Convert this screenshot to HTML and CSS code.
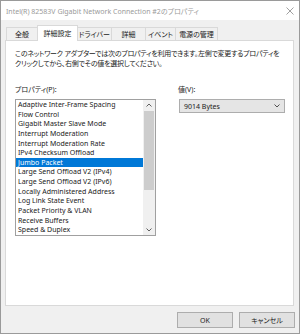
FILE: index.html
```html
<!DOCTYPE html>
<html>

<head>
    <title>
        プロパティ
    </title>
    <link rel="stylesheet" href="styles.css">
</head>

<body>
    <div class="window">
        <div class="titlebar">
            <span class="title">Intel(R) 82583V Gigabit Network Connection #2のプロパティ</span>
            <svg class="close" width="8" height="8" viewBox="0 0 8 8">
                <path d="M0.5 0.5L7.5 7.5M7.5 0.5L0.5 7.5" stroke="#a0a0a0" stroke-width="1" fill="none"/>
            </svg>
        </div>

        <div class="tabs">
            <div class="tab t1">全般</div>
            <div class="tab t2 active">詳細設定</div>
            <div class="tab t3">ドライバー</div>
            <div class="tab t4">詳細</div>
            <div class="tab t5">イベント</div>
            <div class="tab t6">電源の管理</div>
        </div>

        <div class="panel">
            <p class="desc">このネットワーク アダプターでは次のプロパティを利用できます。左側で変更するプロパティを<br>クリックしてから、右側でその値を選択してください。</p>

            <div class="fields">
                <div class="field props">
                    <label>プロパティ(P):</label>
                    <div class="listbox">
                        <ul class="items">
                            <li>Adaptive Inter-Frame Spacing</li>
                            <li>Flow Control</li>
                            <li>Gigabit Master Slave Mode</li>
                            <li>Interrupt Moderation</li>
                            <li>Interrupt Moderation Rate</li>
                            <li>IPv4 Checksum Offload</li>
                            <li class="selected">Jumbo Packet</li>
                            <li>Large Send Offload V2 (IPv4)</li>
                            <li>Large Send Offload V2 (IPv6)</li>
                            <li>Locally Administered Address</li>
                            <li>Log Link State Event</li>
                            <li>Packet Priority &amp; VLAN</li>
                            <li>Receive Buffers</li>
                            <li>Speed &amp; Duplex</li>
                        </ul>
                        <div class="scrollbar">
                            <div class="arrow">
                                <svg width="6" height="4" viewBox="0 0 6 4"><path d="M0.5 3.5L3 1L5.5 3.5" stroke="#606060" fill="none"/></svg>
                            </div>
                            <div class="track">
                                <div class="thumb"></div>
                            </div>
                            <div class="arrow">
                                <svg width="6" height="4" viewBox="0 0 6 4"><path d="M0.5 0.5L3 3L5.5 0.5" stroke="#606060" fill="none"/></svg>
                            </div>
                        </div>
                    </div>
                </div>

                <div class="field value">
                    <label>値(V):</label>
                    <div class="select">
                        <span>9014 Bytes</span>
                        <svg width="6" height="4" viewBox="0 0 6 4"><path d="M0.5 0.5L3 3L5.5 0.5" stroke="#505050" fill="none"/></svg>
                    </div>
                </div>
            </div>
        </div>

        <div class="buttons">
            <button class="btn">OK</button>
            <button class="btn">キャンセル</button>
        </div>
    </div>
</body>
</html>
```

FILE: styles.css
```css
body {
    margin: 0;
    width: 300px;
    height: 334px;
    background-color: #f0f0f0;
    font-family: "Noto Sans", "Noto Sans CJK JP", sans-serif;
    font-feature-settings: "palt";
    font-size: 7px;
    color: #1a1a1a;
}

.window {
    width: 300px;
    height: 334px;
    box-sizing: border-box;
    border: 1px solid #9a9a9a;
    display: flex;
    flex-direction: column;
}

.titlebar {
    height: 19px;
    background-color: #ffffff;
    display: flex;
    align-items: center;
    justify-content: space-between;
    padding: 0 5px 0 5px;
}

.title {
    color: #9a9a9a;
    font-size: 7px;
    white-space: nowrap;
}

.tabs {
    display: flex;
    align-items: flex-end;
    height: 15px;
    margin-top: 5px;
    padding-left: 5px;
}

.tab {
    height: 13px;
    box-sizing: border-box;
    border: 1px solid #d9d9d9;
    border-bottom: none;
    margin-left: -1px;
    background-color: #f0f0f0;
    display: flex;
    align-items: center;
    justify-content: center;
    white-space: nowrap;
}

.tab.t1 { width: 32px; margin-left: 0; }
.tab.t2 { width: 41px; }
.tab.t3 { width: 35px; }
.tab.t4 { width: 35px; }
.tab.t5 { width: 31px; }
.tab.t6 { width: 43px; }

.tab.active {
    height: 16px;
    margin-bottom: -1px;
    background-color: #ffffff;
    position: relative;
    z-index: 1;
    padding-bottom: 2px;
}

.panel {
    height: 266px;
    box-sizing: border-box;
    margin: 0 5px 0 4px;
    border: 1px solid #d9d9d9;
    background-color: #ffffff;
    padding: 8px 9px 0 9px;
}

.desc {
    margin: 0;
    line-height: 10px;
    white-space: nowrap;
    letter-spacing: -0.25px;
}

.fields {
    display: flex;
    margin-top: 16px;
}

.field label {
    display: block;
    line-height: 10px;
    margin-bottom: 4px;
}

.listbox {
    width: 141px;
    height: 137px;
    box-sizing: border-box;
    border: 1px solid #a0a0a0;
    display: flex;
}

.items {
    list-style: none;
    margin: 0;
    padding: 0;
    flex: 1;
}

.items li {
    height: 9.64px;
    line-height: 9.64px;
    padding-left: 2px;
    white-space: nowrap;
}

.items li.selected {
    background-color: #0078d7;
    color: #ffffff;
}

.scrollbar {
    width: 12px;
    background-color: #f0f0f0;
    display: flex;
    flex-direction: column;
}

.arrow {
    height: 10px;
    display: flex;
    align-items: center;
    justify-content: center;
}

.track {
    flex: 1;
    padding: 1px 1px 0 1px;
}

.thumb {
    height: 79px;
    background-color: #cdcdcd;
}

.field.value {
    margin-left: 23px;
}

.field.value label {
    margin-left: -1px;
}

.select {
    width: 106px;
    height: 14px;
    box-sizing: border-box;
    border: 1px solid #adadad;
    background-color: #e5e5e5;
    display: flex;
    align-items: center;
    justify-content: space-between;
    padding: 0 4px 0 4px;
}

.buttons {
    display: flex;
    justify-content: flex-end;
    gap: 6px;
    padding: 6px 4px 0 0;
}

.btn {
    width: 56px;
    height: 16px;
    border: 1px solid #adadad;
    background-color: #e1e1e1;
    font-family: "Noto Sans", "Noto Sans CJK JP", sans-serif;
    font-feature-settings: "palt";
    font-size: 7px;
    color: #1a1a1a;
    padding: 0;
}
```
